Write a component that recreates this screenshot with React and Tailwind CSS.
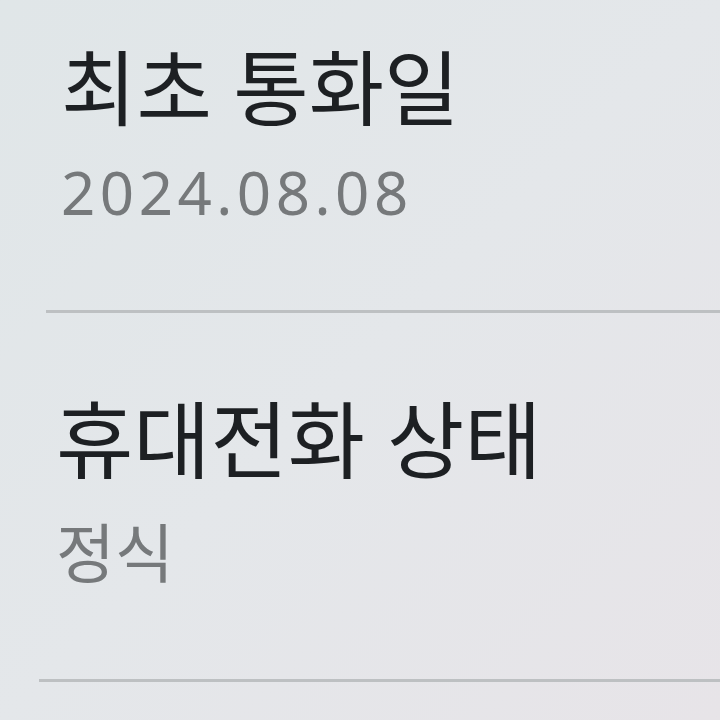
import React from 'react';

const items = [
  {
    title: '최초 통화일',
    value: '2024.08.08',
    rowClass: 'pl-[61px]',
    titleClass: 'text-[82px]',
    valueClass: 'mt-[30px] text-[60px] leading-[60px] tracking-[4.5px]',
    dividerClass: 'mt-[88px] ml-[46px]',
  },
  {
    title: '휴대전화 상태',
    value: '정식',
    rowClass: 'pl-[56px]',
    titleClass: 'text-[84px]',
    valueClass: 'mt-[33px] text-[64px] leading-[70px]',
    dividerClass: 'mt-[91px] ml-[39px]',
  },
];

const App = () => {
  return (
    <div
      className="w-[720px] h-[720px] overflow-hidden bg-gradient-to-br from-[#e0e6e8] via-[#e4e7ea] to-[#e7e4e8]"
      style={{ fontFamily: '"Noto Sans", "Noto Sans CJK KR", sans-serif' }}
    >
      <div className="pt-[42px]">
        {items.map((item, i) => (
          <div key={item.title} className={i > 0 ? 'mt-[82px]' : ''}>
            <div className={item.rowClass}>
              <p className={`${item.titleClass} leading-[90px] text-[#1d2023]`}>
                {item.title}
              </p>
              <p className={`${item.valueClass} text-[#76797b]`}>
                {item.value}
              </p>
            </div>
            <div className={`${item.dividerClass} h-[3px] bg-[#bdc0c2]`} />
          </div>
        ))}
      </div>
    </div>
  );
};

export default App;
